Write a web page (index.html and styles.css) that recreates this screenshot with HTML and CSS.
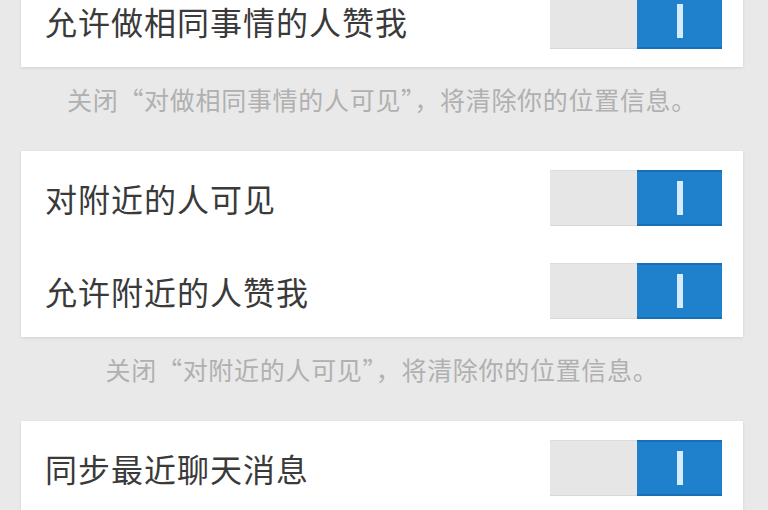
FILE: index.html
```html
<!DOCTYPE html>
<html lang="zh-CN">
<head>
<meta charset="utf-8">
<title>隐私设置</title>
<link rel="stylesheet" href="styles.css">
</head>
<body>
<div class="page">
  <div class="card card-first">
    <div class="row">
      <span class="label">允许做相同事情的人赞我</span>
      <div class="toggle"><span class="off"></span><span class="on"><i class="knob"></i></span></div>
    </div>
  </div>
  <p class="hint">关闭“对做相同事情的人可见”，将清除你的位置信息。</p>
  <div class="card">
    <div class="row">
      <span class="label">对附近的人可见</span>
      <div class="toggle"><span class="off"></span><span class="on"><i class="knob"></i></span></div>
    </div>
    <div class="row">
      <span class="label">允许附近的人赞我</span>
      <div class="toggle"><span class="off"></span><span class="on"><i class="knob"></i></span></div>
    </div>
  </div>
  <p class="hint">关闭“对附近的人可见”，将清除你的位置信息。</p>
  <div class="card">
    <div class="row">
      <span class="label">同步最近聊天消息</span>
      <div class="toggle"><span class="off"></span><span class="on"><i class="knob"></i></span></div>
    </div>
  </div>
</div>
</body>
</html>
```

FILE: styles.css
```css
html, body {
  margin: 0;
  padding: 0;
  background: #e9e9e9;
  overflow: hidden;
}

body {
  font-family: "Noto Sans CJK SC", "Noto Sans", sans-serif;
}

.page {
  display: flex;
  flex-direction: column;
  padding: 0 25px 0 21px;
  margin-top: -26px;
}

.card {
  background: #ffffff;
  box-shadow: 0 1px 3px rgba(0, 0, 0, 0.10);
}

.row {
  height: 93px;
  display: flex;
  align-items: center;
  justify-content: space-between;
  padding: 0 21px 0 24px;
}

.label {
  font-size: 32px;
  line-height: 1;
  color: #3a3a3a;
  letter-spacing: 1px;
}

.toggle {
  display: flex;
  width: 172px;
  height: 56px;
}

.off {
  width: 87px;
  background: #e6e6e6;
  border-top: 1px solid #dcdcdc;
  border-bottom: 1px solid #d8d8d8;
  box-sizing: border-box;
}

.on {
  flex: 1;
  background: #1f80cc;
  border-top: 2px solid #176fb5;
  border-bottom: 2px solid #176fb5;
  box-sizing: border-box;
  display: flex;
  align-items: center;
  justify-content: center;
}

.knob {
  display: block;
  width: 6px;
  height: 34px;
  background: #d4ecfa;
}

.hint {
  margin: 0;
  height: 84px;
  box-sizing: border-box;
  padding-top: 18px;
  text-align: center;
  font-size: 25px;
  line-height: 28px;
  letter-spacing: 0.7px;
  color: #b0b0b0;
}
```
